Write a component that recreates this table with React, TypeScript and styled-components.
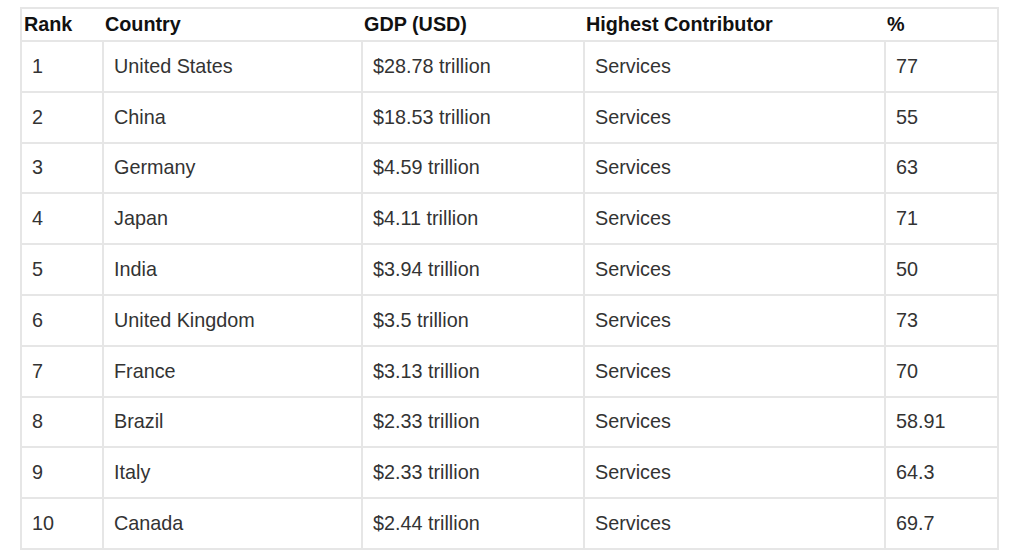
import React from 'react'
import styled, { createGlobalStyle } from 'styled-components'

const GlobalStyle = createGlobalStyle`
    html, body {
        margin: 0;
        padding: 0;
        background: #ffffff;
    }
    body {
        font-family: "Liberation Sans", Arial, sans-serif;
    }
`

const rows = [
    ['1', 'United States', '$28.78 trillion', 'Services', '77'],
    ['2', 'China', '$18.53 trillion', 'Services', '55'],
    ['3', 'Germany', '$4.59 trillion', 'Services', '63'],
    ['4', 'Japan', '$4.11 trillion', 'Services', '71'],
    ['5', 'India', '$3.94 trillion', 'Services', '50'],
    ['6', 'United Kingdom', '$3.5 trillion', 'Services', '73'],
    ['7', 'France', '$3.13 trillion', 'Services', '70'],
    ['8', 'Brazil', '$2.33 trillion', 'Services', '58.91'],
    ['9', 'Italy', '$2.33 trillion', 'Services', '64.3'],
    ['10', 'Canada', '$2.44 trillion', 'Services', '69.7'],
]

const widths = [82, 259, 222, 301, 113]

export default function App() {
    return (
        <Page>
            <GlobalStyle />
            <Table>
                <colgroup>
                    {widths.map((w, i) => <col key={i} style={{ width: w }} />)}
                </colgroup>
                <thead>
                    <tr>
                        <Head>Rank</Head>
                        <Head>Country</Head>
                        <Head>GDP (USD)</Head>
                        <Head>Highest Contributor</Head>
                        <Head>%</Head>
                    </tr>
                </thead>
                <tbody>
                    {rows.map(r => (
                        <tr key={r[0]}>
                            {r.map((c, i) => <Cell key={i}>{c}</Cell>)}
                        </tr>
                    ))}
                </tbody>
            </Table>
        </Page>
    )
}

const Page = styled.main`
    padding: 7px 0 0 20px;
`

const Table = styled.table`
    width: 977px;
    table-layout: fixed;
    border-collapse: collapse;
    border: 2px solid #e6e6e6;
    font-size: 19.8px;
`

const Head = styled.th`
    height: 31px;
    padding: 0 2px;
    text-align: left;
    font-weight: 700;
    color: #111111;
    border-bottom: 2px solid #e6e6e6;
`

const Cell = styled.td`
    height: 48.8px;
    padding: 0 10px;
    color: #333333;
    border: 2px solid #e6e6e6;
`
